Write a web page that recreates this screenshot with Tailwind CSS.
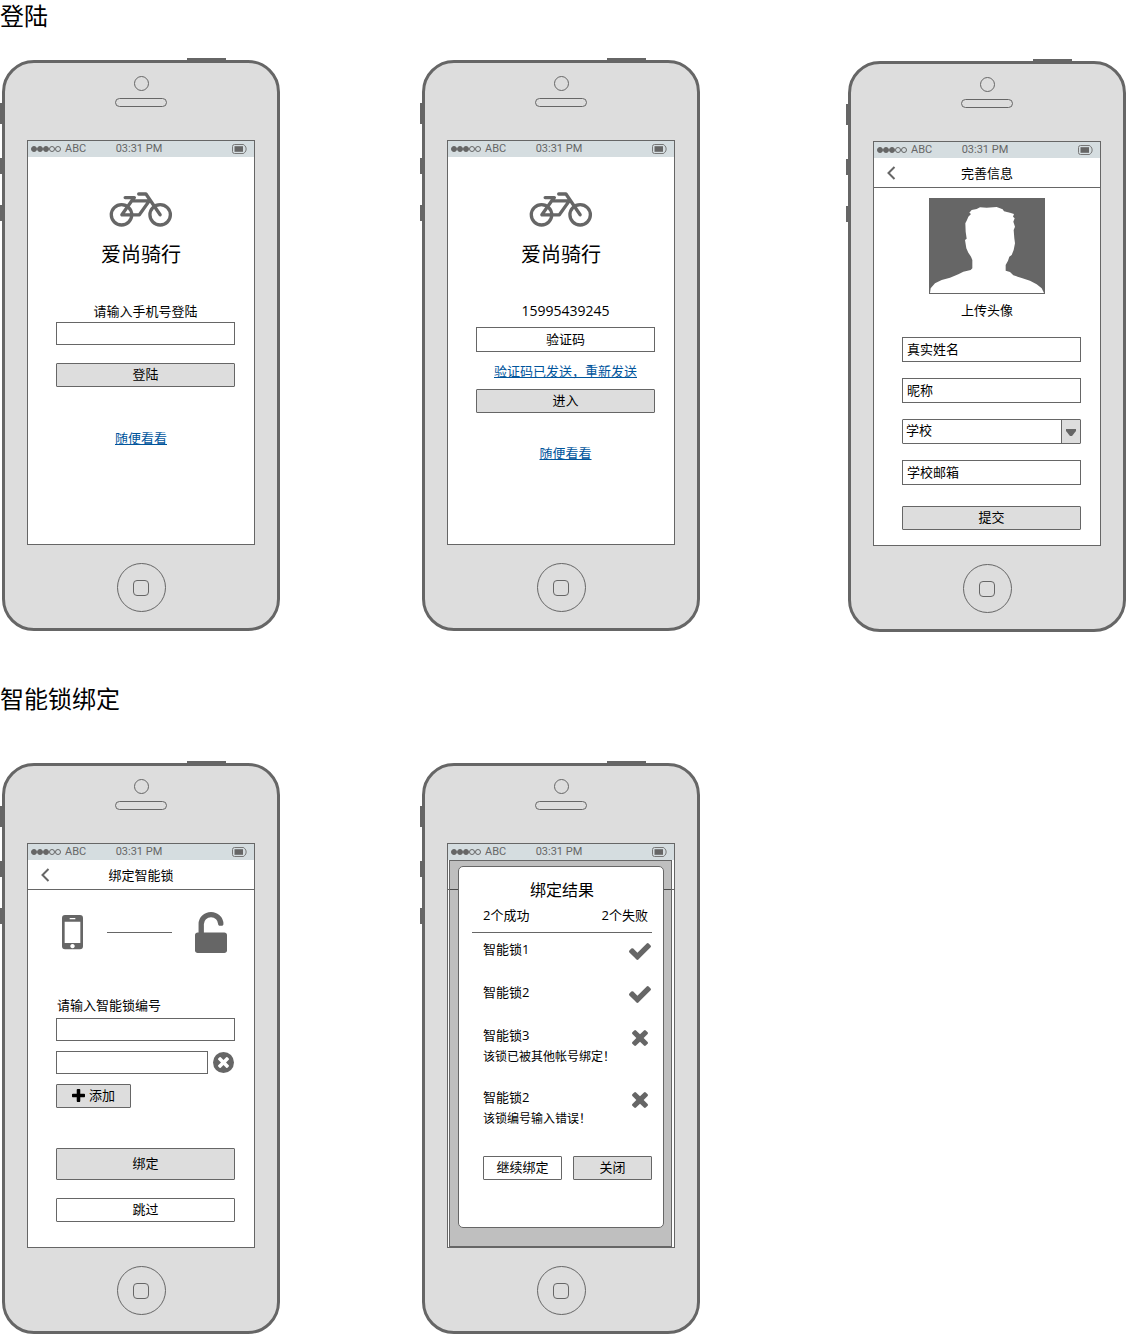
<!DOCTYPE html>
<html lang="zh-CN">
<head>
<meta charset="utf-8">
<meta name="viewport" content="width=device-width, initial-scale=1">
<title>爱尚骑行</title>
<script src="https://cdn.jsdelivr.net/npm/@tailwindcss/browser@4"></script>
</head>
<body class="bg-white text-black text-[13px] leading-5 font-['Open_Sans','Noto_Sans_CJK_SC',sans-serif]">

<!-- Shared icons -->
<svg class="hidden" aria-hidden="true">
  <symbol id="signal" viewBox="0 0 30 6">
    <g fill="#666" stroke="#666"><circle cx="3" cy="3" r="2.5"/><circle cx="9" cy="3" r="2.5"/><circle cx="15" cy="3" r="2.5"/></g>
    <g fill="none" stroke="#666"><circle cx="21" cy="3" r="2.5"/><circle cx="27" cy="3" r="2.5"/></g>
  </symbol>
  <symbol id="battery" viewBox="0 0 15 10">
    <path d="M2.500.5h8.500q1 0 1.500.8l1.300 1.700q.7 2 0 4l-1.300 1.700q-.5.8-1.500.8H2.500q-2 0-2-2v-5q0-2 2-2z" fill="none" stroke="#777"/>
    <path d="M2.500 2.200h8.500v5.600h-8.500z" fill="#666"/>
  </symbol>
  <symbol id="bike" viewBox="0 0 192 106">
    <g fill="none" stroke="#666" stroke-width="10" stroke-linecap="round" stroke-linejoin="round">
      <circle cx="37" cy="69" r="31"/><circle cx="154" cy="69" r="31"/>
      <path d="M48 17H76M74 18L38 69H91L121 27H70M89 6H111L154 69"/>
    </g>
  </symbol>
  <symbol id="back" viewBox="0 0 9 14"><path d="M7.500 1L1.500 7l6 6" fill="none" stroke="#666" stroke-width="2"/></symbol>
  <symbol id="check" viewBox="121 334 1550 1188"><path d="M1671 566q0 40-28 68l-724 724-136 136q-28 28-68 28t-68-28l-136-136-362-362q-28-28-28-68t28-68l136-136q28-28 68-28t68 28l294 295 656-657q28-28 68-28t68 28l136 136q28 28 28 68z"/></symbol>
  <symbol id="cross" viewBox="302 366 1188 1188"><path d="M1490 1322q0 40-28 68l-136 136q-28 28-68 28t-68-28l-294-294-294 294q-28 28-68 28t-68-28l-136-136q-28-28-28-68t28-68l294-294-294-294q-28-28-28-68t28-68l136-136q28-28 68-28t68 28l294 294 294-294q28-28 68-28t68 28l136 136q28 28 28 68t-28 68l-294 294 294 294q28 28 28 68z"/></symbol>
</svg>

<main class="w-full">
<section>
  <h1 class="text-2xl leading-8">登陆</h1>
  <div class="mt-7 ml-0.5 flex flex-wrap items-start gap-x-[142px] gap-y-12">

    <!-- Phone: log in -->
    <article class="relative flex w-[278px] shrink-0 flex-col items-center rounded-[32px] border-3 border-[#666] bg-[#ddd] px-[22px] pt-[13px] pb-4">
      <span class="absolute -top-[5px] left-[182px] h-[3px] w-[39px] bg-[#666]"></span>
      <span class="absolute top-10 -left-[5px] h-[21px] w-[3px] bg-[#666]"></span>
      <span class="absolute top-[95px] -left-[5px] h-4 w-[3px] bg-[#666]"></span>
      <span class="absolute top-[142px] -left-[5px] h-4 w-[3px] bg-[#666]"></span>
      <span class="size-[15px] rounded-full border border-[#666]"></span>
      <span class="mt-[7px] h-[9px] w-[52px] rounded-full border border-[#666]"></span>
      <div class="mt-[33px] flex h-[405px] w-full flex-col border border-[#666] bg-white">
        <header class="grid h-4 grid-cols-3 items-center bg-[#d5dde0] pr-[7px] pl-[3px] font-[Roboto,sans-serif] text-[11px] leading-4 text-[#666]">
          <span class="flex items-center gap-1"><svg class="h-1.5 w-[30px]" aria-hidden="true"><use href="#signal"/></svg>ABC</span>
          <time class="text-center">03:31 PM</time>
          <svg class="h-2.5 w-[15px] justify-self-end" aria-hidden="true"><use href="#battery"/></svg>
        </header>
        <svg class="mt-[35px] h-[35px] w-16 self-center" aria-hidden="true"><use href="#bike"/></svg>
        <h2 class="mt-3.5 text-center text-xl leading-7">爱尚骑行</h2>
        <form class="mt-8 mr-[19px] ml-7 flex flex-col">
          <label for="mobile" class="text-center">请输入手机号登陆</label>
          <input id="mobile" type="tel" class="mt-px h-[23px] w-full border border-[#666] px-1">
          <button type="button" class="mt-[18px] h-6 rounded-[1px] border border-[#666] bg-[#ddd] pb-0.5">登陆</button>
        </form>
        <a href="#" class="mt-[41px] self-center text-[#00559c] underline">随便看看</a>
      </div>
      <button type="button" aria-label="Home" class="mt-[18px] flex size-[49px] items-center justify-center rounded-full border border-[#666]"><span class="size-4 rounded-[4px] border border-[#666]"></span></button>
    </article>

    <!-- Phone: verification code -->
    <article class="relative flex w-[278px] shrink-0 flex-col items-center rounded-[32px] border-3 border-[#666] bg-[#ddd] px-[22px] pt-[13px] pb-4">
      <span class="absolute -top-[5px] left-[182px] h-[3px] w-[39px] bg-[#666]"></span>
      <span class="absolute top-10 -left-[5px] h-[21px] w-[3px] bg-[#666]"></span>
      <span class="absolute top-[95px] -left-[5px] h-4 w-[3px] bg-[#666]"></span>
      <span class="absolute top-[142px] -left-[5px] h-4 w-[3px] bg-[#666]"></span>
      <span class="size-[15px] rounded-full border border-[#666]"></span>
      <span class="mt-[7px] h-[9px] w-[52px] rounded-full border border-[#666]"></span>
      <div class="mt-[33px] flex h-[405px] w-full flex-col border border-[#666] bg-white">
        <header class="grid h-4 grid-cols-3 items-center bg-[#d5dde0] pr-[7px] pl-[3px] font-[Roboto,sans-serif] text-[11px] leading-4 text-[#666]">
          <span class="flex items-center gap-1"><svg class="h-1.5 w-[30px]" aria-hidden="true"><use href="#signal"/></svg>ABC</span>
          <time class="text-center">03:31 PM</time>
          <svg class="h-2.5 w-[15px] justify-self-end" aria-hidden="true"><use href="#battery"/></svg>
        </header>
        <svg class="mt-[35px] h-[35px] w-16 self-center" aria-hidden="true"><use href="#bike"/></svg>
        <h2 class="mt-3.5 text-center text-xl leading-7">爱尚骑行</h2>
        <form class="mt-8 mr-[19px] ml-7 flex flex-col">
          <p class="text-center text-sm leading-5">15995439245</p>
          <input type="text" aria-label="验证码" placeholder="验证码" class="mt-1.5 h-[25px] w-full border border-[#666] px-1 pb-0.5 text-center placeholder:text-black">
          <a href="#" class="mt-[9px] self-center text-[#00559c] underline">验证码已发送，重新发送</a>
          <button type="button" class="mt-2 h-6 rounded-[1px] border border-[#666] bg-[#ddd] pb-0.5">进入</button>
          <a href="#" class="mt-[30px] self-center text-[#00559c] underline">随便看看</a>
        </form>
      </div>
      <button type="button" aria-label="Home" class="mt-[18px] flex size-[49px] items-center justify-center rounded-full border border-[#666]"><span class="size-4 rounded-[4px] border border-[#666]"></span></button>
    </article>

    <!-- Phone: complete the profile -->
    <article class="relative mt-px ml-1.5 flex w-[278px] shrink-0 flex-col items-center rounded-[32px] border-3 border-[#666] bg-[#ddd] px-[22px] pt-[13px] pb-4">
      <span class="absolute -top-[5px] left-[182px] h-[3px] w-[39px] bg-[#666]"></span>
      <span class="absolute top-10 -left-[5px] h-[21px] w-[3px] bg-[#666]"></span>
      <span class="absolute top-[95px] -left-[5px] h-4 w-[3px] bg-[#666]"></span>
      <span class="absolute top-[142px] -left-[5px] h-4 w-[3px] bg-[#666]"></span>
      <span class="size-[15px] rounded-full border border-[#666]"></span>
      <span class="mt-[7px] h-[9px] w-[52px] rounded-full border border-[#666]"></span>
      <div class="mt-[33px] flex h-[405px] w-full flex-col border border-[#666] bg-white">
        <header class="grid h-4 grid-cols-3 items-center bg-[#d5dde0] pr-[7px] pl-[3px] font-[Roboto,sans-serif] text-[11px] leading-4 text-[#666]">
          <span class="flex items-center gap-1"><svg class="h-1.5 w-[30px]" aria-hidden="true"><use href="#signal"/></svg>ABC</span>
          <time class="text-center">03:31 PM</time>
          <svg class="h-2.5 w-[15px] justify-self-end" aria-hidden="true"><use href="#battery"/></svg>
        </header>
        <nav class="grid h-[30px] grid-cols-[1fr_auto_1fr] items-center border-b border-[#666] pl-[13px]">
          <a href="#" aria-label="返回"><svg class="h-3.5 w-[9px]" aria-hidden="true"><use href="#back"/></svg></a>
          <h2 class="pr-[13px]">完善信息</h2>
        </nav>
        <svg class="mt-2.5 h-24 w-[116px] self-center" viewBox="0 0 348 288" role="img" aria-label="头像">
          <rect width="348" height="288" fill="#666"/>
          <path fill="#fff" d="M3 285L5 271 18 256 38 246 63 239 88 229 103 221 125 216 130 211V186L126 176 118 164 112 151 108 126 113 122 110 101 109 76 114 66 118 56 126 48 121 44 128 36 143 33 153 28 173 29 203 27 221 34 225 40 243 44 255 48 252 56 257 61 253 71 258 86 254 96 256 121 258 136 254 156 248 171 241 176 237 188 230 201V218L243 222 253 232 278 240 303 248 323 259 338 271 345 285Z"/>
        </svg>
        <p class="mt-1.5 text-center">上传头像</p>
        <form class="mt-[17px] mr-[19px] ml-7 flex flex-col gap-4">
          <input type="text" aria-label="真实姓名" placeholder="真实姓名" class="h-[25px] w-full border border-[#666] px-1 pb-0.5 placeholder:text-black">
          <input type="text" aria-label="昵称" placeholder="昵称" class="h-[25px] w-full border border-[#666] px-1 pb-0.5 placeholder:text-black">
          <div class="relative">
            <select aria-label="学校" class="block h-[25px] w-full appearance-none rounded-[1px] border border-[#666] bg-white px-[3px] pb-1"><option>学校</option></select>
            <span class="pointer-events-none absolute inset-y-px right-px flex w-[19px] items-center justify-center border-l border-[#666] bg-[#ddd]">
              <svg class="h-2 w-2.5" viewBox="0 0 10 8" aria-hidden="true"><path d="M0 1h10v2L6 8H4L0 3z" fill="#666"/></svg>
            </span>
          </div>
          <input type="email" aria-label="学校邮箱" placeholder="学校邮箱" class="h-[25px] w-full border border-[#666] px-1 pb-0.5 placeholder:text-black">
          <button type="button" class="mt-[5px] h-6 rounded-[1px] border border-[#666] bg-[#ddd] pb-0.5">提交</button>
        </form>
      </div>
      <button type="button" aria-label="Home" class="mt-[18px] flex size-[49px] items-center justify-center rounded-full border border-[#666]"><span class="size-4 rounded-[4px] border border-[#666]"></span></button>
    </article>
  </div>
</section>

<section class="mt-[51px]">
  <h1 class="text-2xl leading-8">智能锁绑定</h1>
  <div class="mt-12 ml-0.5 flex flex-wrap items-start gap-x-[142px] gap-y-12">

    <!-- Phone: bind a lock -->
    <article class="relative flex w-[278px] shrink-0 flex-col items-center rounded-[32px] border-3 border-[#666] bg-[#ddd] px-[22px] pt-[13px] pb-4">
      <span class="absolute -top-[5px] left-[182px] h-[3px] w-[39px] bg-[#666]"></span>
      <span class="absolute top-10 -left-[5px] h-[21px] w-[3px] bg-[#666]"></span>
      <span class="absolute top-[95px] -left-[5px] h-4 w-[3px] bg-[#666]"></span>
      <span class="absolute top-[142px] -left-[5px] h-4 w-[3px] bg-[#666]"></span>
      <span class="size-[15px] rounded-full border border-[#666]"></span>
      <span class="mt-[7px] h-[9px] w-[52px] rounded-full border border-[#666]"></span>
      <div class="mt-[33px] flex h-[405px] w-full flex-col border border-[#666] bg-white">
        <header class="grid h-4 grid-cols-3 items-center bg-[#d5dde0] pr-[7px] pl-[3px] font-[Roboto,sans-serif] text-[11px] leading-4 text-[#666]">
          <span class="flex items-center gap-1"><svg class="h-1.5 w-[30px]" aria-hidden="true"><use href="#signal"/></svg>ABC</span>
          <time class="text-center">03:31 PM</time>
          <svg class="h-2.5 w-[15px] justify-self-end" aria-hidden="true"><use href="#battery"/></svg>
        </header>
        <nav class="grid h-[30px] grid-cols-[1fr_auto_1fr] items-center border-b border-[#666] pl-[13px]">
          <a href="#" aria-label="返回"><svg class="h-3.5 w-[9px]" aria-hidden="true"><use href="#back"/></svg></a>
          <h2 class="pr-[13px]">绑定智能锁</h2>
        </nav>
        <div class="mt-[22px] mr-[27px] ml-[34px] flex h-[41px] items-center justify-between">
          <svg class="h-[35px] w-[21px]" viewBox="0 0 63 105" aria-hidden="true">
            <path fill="#666" fill-rule="evenodd" d="M9 0H54Q63 0 63 9V94Q63 103 54 103H9Q0 103 0 94V9Q0 0 9 0ZM8 20V84H55V20ZM23 9V13H40V9ZM31.500 87a6.500 6.500 0 1 0 .1 0Z"/>
          </svg>
          <span class="h-px w-[65px] bg-[#666]"></span>
          <svg class="h-[41px] w-8" viewBox="320 0 1152 1536" preserveAspectRatio="none" fill="#666" aria-hidden="true"><path d="M1376 768q40 0 68 28t28 68v576q0 40-28 68t-68 28h-960q-40 0-68-28t-28-68v-576q0-40 28-68t68-28h32v-320q0-185 131.500-316.500t316.500-131.500 316.500 131.500 131.500 316.500q0 26-19 45t-45 19h-64q-26 0-45-19t-19-45q0-106-75-181t-181-75-181 75-75 181v320h736z"/></svg>
        </div>
        <form class="mt-[42px] mr-[19px] ml-7 flex flex-col">
          <label for="lock1" class="pl-px">请输入智能锁编号</label>
          <input id="lock1" type="text" class="mt-[3px] h-[23px] w-full border border-[#666] px-1">
          <div class="mt-2.5 flex items-center gap-[5px] pr-px">
            <input type="text" aria-label="智能锁编号" class="h-[23px] min-w-0 flex-1 border border-[#666] px-1">
            <button type="button" aria-label="删除" class="size-[21px]">
              <svg class="size-[21px]" viewBox="0 0 21 21" aria-hidden="true"><circle cx="10.500" cy="10.500" r="10.500" fill="#666"/><use href="#cross" x="5" y="5" width="11" height="11" fill="#fff"/></svg>
            </button>
          </div>
          <button type="button" class="mt-2.5 flex h-6 w-[75px] items-center justify-center gap-1 rounded-[1px] border border-[#666] bg-[#ddd] pb-0.5">
            <svg class="size-[13px]" viewBox="192 128 1408 1408" aria-hidden="true"><path d="M1600 736v192q0 40-28 68t-68 28h-416v416q0 40-28 68t-68 28h-192q-40 0-68-28t-28-68v-416h-416q-40 0-68-28t-28-68v-192q0-40 28-68t68-28h416v-416q0-40 28-68t68-28h192q40 0 68 28t28 68v416h416q40 0 68 28t28 68z"/></svg>添加
          </button>
          <button type="button" class="mt-10 h-8 rounded-[1px] border border-[#666] bg-[#ddd] pb-0.5">绑定</button>
          <button type="button" class="mt-[18px] h-6 rounded-[1px] border border-[#666] bg-white pb-0.5">跳过</button>
        </form>
      </div>
      <button type="button" aria-label="Home" class="mt-[18px] flex size-[49px] items-center justify-center rounded-full border border-[#666]"><span class="size-4 rounded-[4px] border border-[#666]"></span></button>
    </article>

    <!-- Phone: binding results -->
    <article class="relative flex w-[278px] shrink-0 flex-col items-center rounded-[32px] border-3 border-[#666] bg-[#ddd] px-[22px] pt-[13px] pb-4">
      <span class="absolute -top-[5px] left-[182px] h-[3px] w-[39px] bg-[#666]"></span>
      <span class="absolute top-10 -left-[5px] h-[21px] w-[3px] bg-[#666]"></span>
      <span class="absolute top-[95px] -left-[5px] h-4 w-[3px] bg-[#666]"></span>
      <span class="absolute top-[142px] -left-[5px] h-4 w-[3px] bg-[#666]"></span>
      <span class="size-[15px] rounded-full border border-[#666]"></span>
      <span class="mt-[7px] h-[9px] w-[52px] rounded-full border border-[#666]"></span>
      <div class="mt-[33px] flex h-[405px] w-full flex-col border border-[#666] bg-white">
        <header class="grid h-4 grid-cols-3 items-center bg-[#d5dde0] pr-[7px] pl-[3px] font-[Roboto,sans-serif] text-[11px] leading-4 text-[#666]">
          <span class="flex items-center gap-1"><svg class="h-1.5 w-[30px]" aria-hidden="true"><use href="#signal"/></svg>ABC</span>
          <time class="text-center">03:31 PM</time>
          <svg class="h-2.5 w-[15px] justify-self-end" aria-hidden="true"><use href="#battery"/></svg>
        </header>
        <div class="relative flex-1">
          <div class="h-[30px] border-b border-[#666]"></div>
          <div class="absolute inset-y-0 right-0.5 left-px border border-[#666] bg-black/25 pt-[5px] pr-[7px] pl-2">
            <div role="dialog" aria-labelledby="result" class="flex h-[362px] flex-col rounded-[5px] border border-[#666] bg-white pr-[11px] pl-[13px]">
              <h2 id="result" class="mt-[11px] text-center text-base leading-6">绑定结果</h2>
              <div class="flex justify-between border-b border-[#666] pt-[3px] pr-1 pb-[7px] pl-[11px]"><span>2个成功</span><span>2个失败</span></div>
              <ul class="mt-1.5 flex flex-col pl-[11px]">
                <li class="flex h-[43px] justify-between pr-px"><span>智能锁1</span><svg class="mt-1 h-[17px] w-[22px]" fill="#666" aria-label="成功"><use href="#check"/></svg></li>
                <li class="flex h-[43px] justify-between pr-px"><span>智能锁2</span><svg class="mt-1 h-[17px] w-[22px]" fill="#666" aria-label="成功"><use href="#check"/></svg></li>
                <li class="flex h-[62px] justify-between pr-1"><div>智能锁3<p class="mt-0.5 text-xs leading-5">该锁已被其他帐号绑定！</p></div><svg class="mt-[5px] size-4" fill="#666" aria-label="失败"><use href="#cross"/></svg></li>
                <li class="flex h-[41px] justify-between pr-1"><div>智能锁2<p class="mt-0.5 text-xs leading-5">该锁编号输入错误！</p></div><svg class="mt-[5px] size-4" fill="#666" aria-label="失败"><use href="#cross"/></svg></li>
              </ul>
              <div class="mt-7 flex gap-[11px] pl-[11px]">
                <button type="button" class="h-6 flex-1 rounded-[1px] border border-[#666] bg-white pb-0.5">继续绑定</button>
                <button type="button" class="h-6 flex-1 rounded-[1px] border border-[#666] bg-[#ddd] pb-0.5">关闭</button>
              </div>
            </div>
          </div>
        </div>
      </div>
      <button type="button" aria-label="Home" class="mt-[18px] flex size-[49px] items-center justify-center rounded-full border border-[#666]"><span class="size-4 rounded-[4px] border border-[#666]"></span></button>
    </article>
  </div>
</section>
</main>
</body>
</html>
